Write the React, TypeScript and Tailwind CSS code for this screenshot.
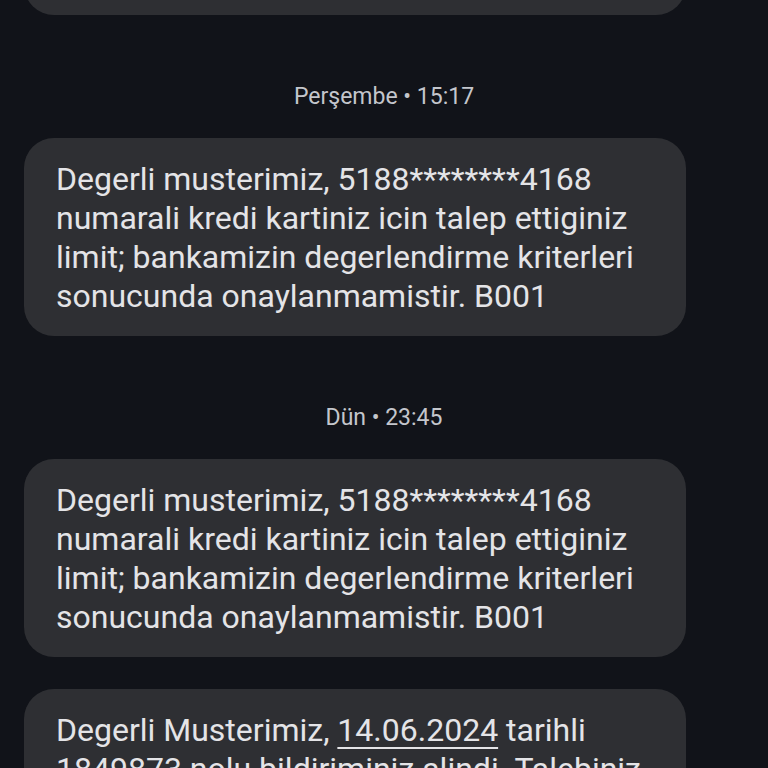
import React from "react";

const font = { fontFamily: "Roboto, 'Noto Sans', sans-serif" };

function DateHeader({ label }: { label: string }) {
  return (
    <div className="mt-[68px] mb-[27px] text-center text-[23px] leading-[28px] text-[#c4c6cc]">
      {label}
    </div>
  );
}

function Bubble({ children }: { children: React.ReactNode }) {
  return (
    <div className="ml-[24px] w-[662px] rounded-[30px] bg-[#2e2f33] px-[32px] pt-[22px] pb-[20px] text-[32px] leading-[39px] text-[#e4e4e7]">
      {children}
    </div>
  );
}

export default function App() {
  const msg = (
    <>
      Degerli musterimiz, 5188********4168
      <br />
      numarali kredi kartiniz icin talep ettiginiz
      <br />
      limit; bankamizin degerlendirme kriterleri
      <br />
      sonucunda onaylanmamistir. B001
    </>
  );

  return (
    <div className="h-[768px] w-[768px] overflow-hidden bg-[#111319]" style={font}>
      <div className="-mt-[20px] ml-[24px] h-[35px] w-[662px] rounded-b-[30px] bg-[#2e2f33]" />

      <DateHeader label="Perşembe • 15:17" />
      <Bubble>{msg}</Bubble>

      <DateHeader label="Dün • 23:45" />
      <Bubble>{msg}</Bubble>

      <div className="mt-[32px]">
        <Bubble>
          Degerli Musterimiz,{" "}
          <span className="underline decoration-[2px] underline-offset-[6px]">14.06.2024</span> tarihli
          <br />
          1849873 nolu bildiriminiz alindi. Talebiniz
          <br />
          incelenerek en kisa surede tarafiniza donus
          <br />
          saglanacaktir.
        </Bubble>
      </div>
    </div>
  );
}
